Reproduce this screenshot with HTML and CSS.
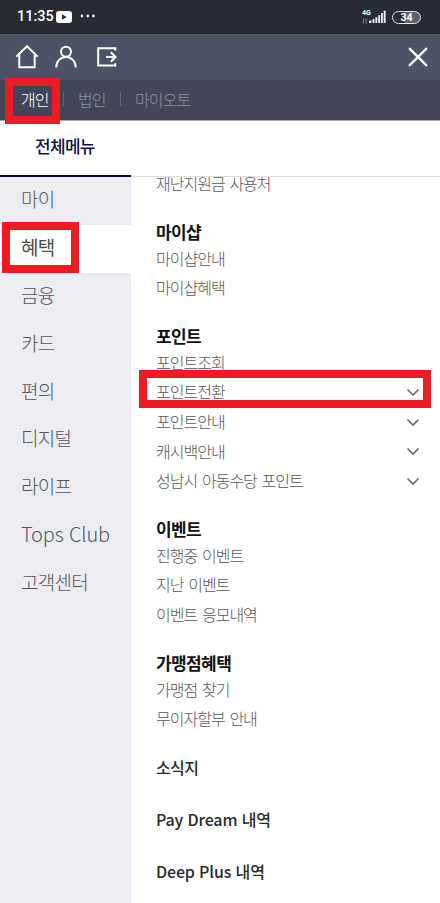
FILE: index.html
```
<!DOCTYPE html>
<html lang="ko">
<head>
<meta charset="utf-8">
<meta name="viewport" content="width=device-width, initial-scale=1">
<title>전체메뉴</title>
<link rel="stylesheet" href="styles.css">
</head>
<body>
<div class="app">
  <div class="status">
    <span class="time">11:35</span>
    <svg class="video" width="16" height="12" viewBox="0 0 16 12"><rect width="16" height="12" rx="3" fill="#fff"/><path d="M6 3.3v5.4L10.6 6z" fill="#292b34"/></svg>
    <svg class="dots" width="16" height="4" viewBox="0 0 16 4" fill="#e8e8ea"><circle cx="2" cy="2" r="1.4"/><circle cx="7.8" cy="2" r="1.4"/><circle cx="13.5" cy="2" r="1.4"/></svg>
    <div class="net"><span class="net-type">4G</span><svg width="6" height="6" viewBox="0 0 6 6" fill="none" stroke="#8b8d94" stroke-width=".8"><path d="M1.5 0v5M.3 4l1.2 1.3M4 6V.8M4 .6l1.3 1.2"/></svg></div>
    <svg class="signal" width="17" height="13" viewBox="0 0 17 13" fill="#f2f2f4"><path d="M0 13v-2l2.3-1v3zM3.6 13V9H5.4v4zM6.4 13V7.2h1.9V13zM9.2 13V5.2h1.9V13zM12 13V3h1.8v10zM14.7 13V.8h1.9V13z"/></svg>
    <span class="battery">34</span>
  </div>
  <header class="toolbar">
    <svg class="home" width="24" height="24" viewBox="0 0 24 24"><path d="M1.3 11.6 12 1.2l10.7 10.4M4.3 9.5v12.8h15.4V9.5"/></svg>
    <svg class="user" width="22" height="24" viewBox="0 0 22 24"><circle cx="11" cy="6.8" r="5"/><path d="M1.3 22.5v-.8a9.7 9.7 0 0 1 19.4 0v.8"/></svg>
    <svg class="logout" width="20" height="20" viewBox="0 0 20 20"><path d="M18.3 3.5V1.2H1.2v17.4h17.1v-2.3M9 10h9.5M13.8 5.2l4.8 4.8-4.8 4.8"/></svg>
    <svg class="close" width="20" height="20" viewBox="0 0 20 20"><path d="m1.8 1.8 16.4 16.4M18.2 1.8 1.8 18.2"/></svg>
  </header>
  <nav class="segments">
    <span class="segment selected">개인</span><i></i><span class="segment">법인</span><i></i><span class="segment">마이오토</span>
    <span class="mark mark-segment"></span>
  </nav>
  <div class="tabs"><div class="tab">전체메뉴</div></div>
  <div class="columns">
    <nav class="side">
      <div>마이</div>
      <div class="active">혜택<span class="mark mark-side"></span></div>
      <div>금융</div>
      <div>카드</div>
      <div>편의</div>
      <div>디지털</div>
      <div>라이프</div>
      <div class="latin">Tops Club</div>
      <div>고객센터</div>
    </nav>
    <main class="menu">
      <ul class="first"><li>재난지원금 사용처</li></ul>
      <h2>마이샵</h2>
      <ul><li>마이샵안내</li><li>마이샵혜택</li></ul>
      <h2>포인트</h2>
      <ul>
        <li>포인트조회</li>
        <li class="more">포인트전환<svg width="14" height="9" viewBox="0 0 14 9"><path d="m1.5 1.5 5.5 5.5 5.5-5.5"/></svg><span class="mark mark-item"></span></li>
        <li class="more">포인트안내<svg width="14" height="9" viewBox="0 0 14 9"><path d="m1.5 1.5 5.5 5.5 5.5-5.5"/></svg></li>
        <li class="more">캐시백안내<svg width="14" height="9" viewBox="0 0 14 9"><path d="m1.5 1.5 5.5 5.5 5.5-5.5"/></svg></li>
        <li class="more">성남시 아동수당 포인트<svg width="14" height="9" viewBox="0 0 14 9"><path d="m1.5 1.5 5.5 5.5 5.5-5.5"/></svg></li>
      </ul>
      <h2>이벤트</h2>
      <ul><li>진행중 이벤트</li><li>지난 이벤트</li><li>이벤트 응모내역</li></ul>
      <h2>가맹점혜택</h2>
      <ul><li>가맹점 찾기</li><li>무이자할부 안내</li></ul>
      <h3>소식지</h3>
      <h3 class="wide">Pay Dream 내역</h3>
      <h3 class="wide">Deep Plus 내역</h3>
    </main>
  </div>
</div>
</body>
</html>
```
FILE: styles.css
```
* { box-sizing: border-box; }
body { margin: 0; background: #fff; font-family: "Noto Sans CJK KR", sans-serif; }
.app { width: 440px; height: 903px; overflow: hidden; display: flex; flex-direction: column; }
svg { flex: none; }

.status { flex: none; height: 34px; background: #292b34; color: #fff; display: flex; align-items: center; padding: 0 19px 0 17px; }
.time { width: 39px; font: 500 14.5px/34px Roboto, sans-serif; white-space: nowrap; }
.video { margin-top: -1px; }
.dots { margin: -2px 0 0 8px; }
.net { margin-left: auto; width: 7px; height: 14px; display: flex; flex-direction: column; justify-content: space-between; }
.net-type { font: 700 7px/6px Roboto, sans-serif; }
.signal { margin: -1px 6px 0 0; }
.battery { width: 29px; height: 13px; border: 1.5px solid #e3e3e6; border-radius: 7px; background: linear-gradient(90deg, #292b34 40%, #60626a 40%); font: 700 10.5px/11px Roboto, sans-serif; text-align: center; }

.toolbar { flex: none; height: 46px; background: #4d5366; display: flex; align-items: center; padding: 0 12px 0 15px; }
.toolbar svg { fill: none; stroke: #fff; stroke-width: 2; }
.user { margin-left: 16px; }
.logout { margin-left: 20px; }
.toolbar .close { margin-left: auto; stroke-width: 2.4; stroke-linecap: round; }

.segments { flex: none; position: relative; height: 41px; background: #424658; border-bottom: 1.5px solid #a4a5ac; display: flex; align-items: center; padding: 0 0 2px 21px; color: #8d90a0; font-size: 16px; font-weight: 300; letter-spacing: -.9px; line-height: 36px; white-space: nowrap; }
.segment { width: 29px; }
.segment:last-of-type { width: auto; }
.selected { color: #fff; }
.segments i { width: 1px; height: 14px; background: #62667a; margin: 0 14px 0 13px; }

.tabs { flex: none; height: 56px; border-bottom: 1px solid #dedee2; }
.tab { width: 131px; height: 56px; border-bottom: 2px solid #08083e; padding-left: 35px; color: #10104e; font-size: 17px; font-weight: 500; line-height: 50px; letter-spacing: -.7px; }

.columns { flex: 1; min-height: 0; display: flex; }
.side { width: 131px; background: #ecedf2; color: #55565a; font-size: 19px; font-weight: 300; letter-spacing: -.7px; }
.side div { height: 47.9px; line-height: 44px; padding-left: 21px; position: relative; white-space: nowrap; }
.side .active { background: #fff; font-weight: 400; color: #4c4c4e; }
.side .latin { font-size: 20px; letter-spacing: -.2px; }

.menu { flex: 1; overflow: hidden; padding-left: 25px; color: #58585a; }
.menu ul { list-style: none; margin: 0; padding: 0; }
.menu .first { margin-top: -8.1px; }
.menu li { position: relative; height: 29.55px; line-height: 29.5px; font-size: 16px; font-weight: 300; letter-spacing: -1px; word-spacing: 1.3px; white-space: nowrap; }
.menu .more { display: flex; align-items: center; justify-content: space-between; padding-right: 20px; }
.more svg { fill: none; stroke: #6a6a6c; stroke-width: 1.6; margin-top: 1px; }
.menu h2 { margin: 22.6px 0 0; height: 22.6px; line-height: 22.5px; font-size: 17px; font-weight: 700; letter-spacing: -.6px; color: #111; }
.menu h3 { margin: 22.6px 0 0; height: 22.5px; line-height: 22.5px; font-size: 16px; font-weight: 500; letter-spacing: -.6px; color: #29292b; }
.menu h3 + h3 { margin-top: 29.1px; }
.menu .wide { letter-spacing: -.15px; }

.mark { position: absolute; border: 8px solid #ed1c24; z-index: 2; }
.mark-segment { left: 5px; top: -2px; width: 55px; height: 46px; }
.mark-side { left: 2px; top: -3px; width: 77px; height: 51px; }
.mark-item { left: -17px; top: -7px; width: 292px; height: 38px; }
```
